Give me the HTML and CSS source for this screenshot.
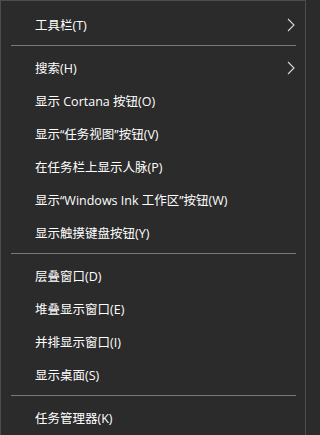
FILE: index.html
```html
<!DOCTYPE html>
<html lang="zh-CN">
<head>
<meta charset="utf-8">
<link rel="stylesheet" href="styles.css">
</head>
<body>
<div class="menu">
  <div class="item"><span class="label">工具栏(T)</span><svg class="chev" width="8" height="14" viewBox="0 0 8 14"><polyline points="1,1 7,7 1,13" fill="none" stroke="#d8d8d8" stroke-width="1.1"/></svg></div>
  <div class="sep"></div>
  <div class="item"><span class="label">搜索(H)</span><svg class="chev" width="8" height="14" viewBox="0 0 8 14"><polyline points="1,1 7,7 1,13" fill="none" stroke="#d8d8d8" stroke-width="1.1"/></svg></div>
  <div class="item"><span class="label">显示 Cortana 按钮(O)</span></div>
  <div class="item"><span class="label">显示“任务视图”按钮(V)</span></div>
  <div class="item"><span class="label">在任务栏上显示人脉(P)</span></div>
  <div class="item"><span class="label">显示“Windows Ink 工作区”按钮(W)</span></div>
  <div class="item"><span class="label">显示触摸键盘按钮(Y)</span></div>
  <div class="sep"></div>
  <div class="item"><span class="label">层叠窗口(D)</span></div>
  <div class="item"><span class="label">堆叠显示窗口(E)</span></div>
  <div class="item"><span class="label">并排显示窗口(I)</span></div>
  <div class="item"><span class="label">显示桌面(S)</span></div>
  <div class="sep"></div>
  <div class="item"><span class="label">任务管理器(K)</span></div>
</div>
</body>
</html>
```
FILE: styles.css
```css
html, body {
  margin: 0;
  padding: 0;
  background: #2b2b2b;
}
.menu {
  width: 304px;
  height: 434px;
  background: #2b2b2b;
  border: 1px solid #4d4d4d;
  border-bottom: none;
  padding-top: 7px;
  box-sizing: content-box;
  font-family: "Open Sans", "Noto Sans CJK SC", sans-serif;
  font-size: 12.5px;
  color: #ffffff;
}
.item {
  height: 33px;
  display: flex;
  align-items: center;
  justify-content: space-between;
  padding-left: 34px;
  padding-right: 10px;
}
.label {
  white-space: nowrap;
  letter-spacing: 0;
}
.chev {
  display: block;
}
.sep {
  height: 1px;
  background: #7a7a7a;
  margin: 4px 9px 5px 10px;
}
```
